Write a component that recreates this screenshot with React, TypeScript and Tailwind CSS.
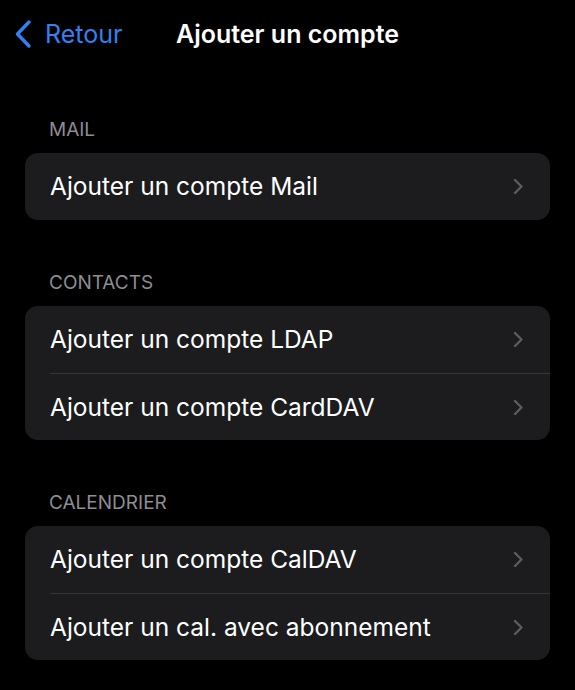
const sections = [
  { title: "MAIL", rows: ["Ajouter un compte Mail"] },
  { title: "CONTACTS", rows: ["Ajouter un compte LDAP", "Ajouter un compte CardDAV"] },
  { title: "CALENDRIER", rows: ["Ajouter un compte CalDAV", "Ajouter un cal. avec abonnement"] },
];

function Chevron() {
  return (
    <svg width="11" height="17" viewBox="0 0 11 17" fill="none" className="shrink-0">
      <path
        d="M2 2l6.5 6.5L2 15"
        stroke="#5b5b60"
        strokeWidth="2.4"
        strokeLinecap="round"
        strokeLinejoin="round"
      />
    </svg>
  );
}

export default function App() {
  return (
    <div className="w-[575px] h-[690px] bg-black text-white font-['Inter',sans-serif] overflow-hidden">
      {/* Nav bar */}
      <div className="grid grid-cols-[1fr_auto_1fr] items-center h-[68px]">
        <div className="flex items-center pl-[14px] gap-[13px] text-[#3281f3]">
          <svg width="18" height="30" viewBox="0 0 18 30" fill="none">
            <path
              d="M15 3L3.5 15L15 27"
              stroke="currentColor"
              strokeWidth="3.4"
              strokeLinecap="round"
              strokeLinejoin="round"
            />
          </svg>
          <span className="text-[25px] leading-none">Retour</span>
        </div>
        <h1 className="text-[25px] font-semibold leading-none">Ajouter un compte</h1>
        <div />
      </div>

      {/* Groups */}
      <div className="flex flex-col gap-[52px] pt-[51px] px-[25px]">
        {sections.map((s) => (
          <div key={s.title}>
            <div className="pl-[24px] h-[22px] leading-[22px] text-[19px] text-[#8d8d93] mb-[12px]">
              {s.title}
            </div>
            <div className="bg-[#1c1c1e] rounded-[13px] overflow-hidden">
              {s.rows.map((r, i) => (
                <div key={r} className="pl-[25px]">
                  <div
                    className={
                      "h-[67px] flex items-center justify-between pr-[26px] " +
                      (i > 0 ? "border-t border-[#353538]" : "")
                    }
                  >
                    <span className="text-[24.5px] leading-none">{r}</span>
                    <Chevron />
                  </div>
                </div>
              ))}
            </div>
          </div>
        ))}
      </div>
    </div>
  );
}
